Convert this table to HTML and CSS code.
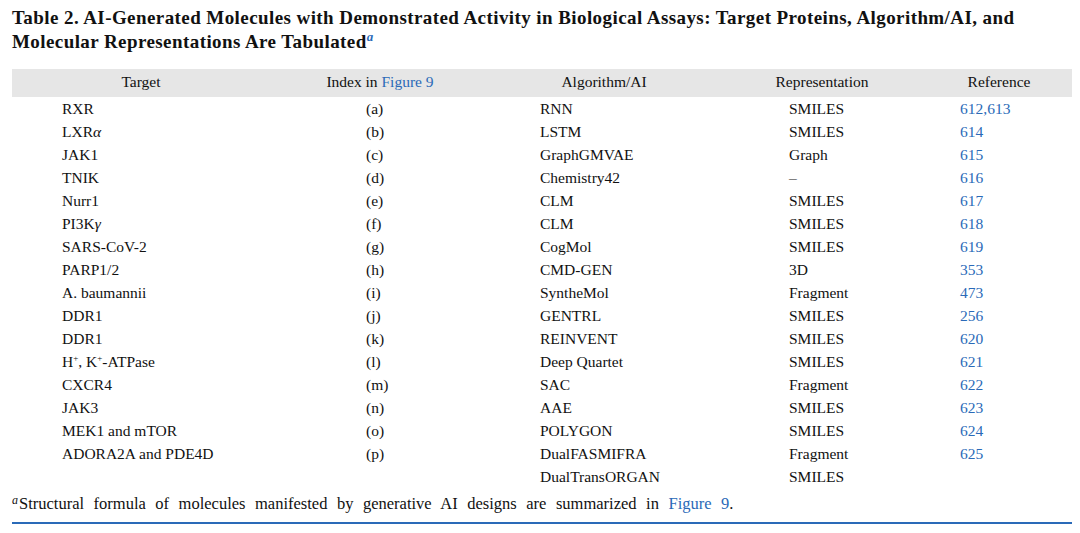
FILE: index.html
```html
<!DOCTYPE html>
<html>
<head>
<meta charset="utf-8">
<link rel="stylesheet" href="styles.css">
</head>
<body>
<div class="page">
  <h1 class="title">Table 2. AI-Generated Molecules with Demonstrated Activity in Biological Assays: Target Proteins, Algorithm/AI, and<br>Molecular Representations Are Tabulated<sup class="fn">a</sup></h1>
  <div class="table">
    <div class="row head">
      <div class="c c1">Target</div>
      <div class="c c2">Index in <span class="link">Figure 9</span></div>
      <div class="c c3">Algorithm/AI</div>
      <div class="c c4">Representation</div>
      <div class="c c5">Reference</div>
    </div>
    <div class="row"><div class="c c1">RXR</div><div class="c c2">(a)</div><div class="c c3">RNN</div><div class="c c4">SMILES</div><div class="c c5 link">612,613</div></div>
    <div class="row"><div class="c c1">LXR<i>α</i></div><div class="c c2">(b)</div><div class="c c3">LSTM</div><div class="c c4">SMILES</div><div class="c c5 link">614</div></div>
    <div class="row"><div class="c c1">JAK1</div><div class="c c2">(c)</div><div class="c c3">GraphGMVAE</div><div class="c c4">Graph</div><div class="c c5 link">615</div></div>
    <div class="row"><div class="c c1">TNIK</div><div class="c c2">(d)</div><div class="c c3">Chemistry42</div><div class="c c4">–</div><div class="c c5 link">616</div></div>
    <div class="row"><div class="c c1">Nurr1</div><div class="c c2">(e)</div><div class="c c3">CLM</div><div class="c c4">SMILES</div><div class="c c5 link">617</div></div>
    <div class="row"><div class="c c1">PI3K<i>γ</i></div><div class="c c2">(f)</div><div class="c c3">CLM</div><div class="c c4">SMILES</div><div class="c c5 link">618</div></div>
    <div class="row"><div class="c c1">SARS-CoV-2</div><div class="c c2">(g)</div><div class="c c3">CogMol</div><div class="c c4">SMILES</div><div class="c c5 link">619</div></div>
    <div class="row"><div class="c c1">PARP1/2</div><div class="c c2">(h)</div><div class="c c3">CMD-GEN</div><div class="c c4">3D</div><div class="c c5 link">353</div></div>
    <div class="row"><div class="c c1">A. baumannii</div><div class="c c2">(i)</div><div class="c c3">SyntheMol</div><div class="c c4">Fragment</div><div class="c c5 link">473</div></div>
    <div class="row"><div class="c c1">DDR1</div><div class="c c2">(j)</div><div class="c c3">GENTRL</div><div class="c c4">SMILES</div><div class="c c5 link">256</div></div>
    <div class="row"><div class="c c1">DDR1</div><div class="c c2">(k)</div><div class="c c3">REINVENT</div><div class="c c4">SMILES</div><div class="c c5 link">620</div></div>
    <div class="row"><div class="c c1">H<sup class="ion">+</sup>, K<sup class="ion">+</sup>-ATPase</div><div class="c c2">(l)</div><div class="c c3">Deep Quartet</div><div class="c c4">SMILES</div><div class="c c5 link">621</div></div>
    <div class="row"><div class="c c1">CXCR4</div><div class="c c2">(m)</div><div class="c c3">SAC</div><div class="c c4">Fragment</div><div class="c c5 link">622</div></div>
    <div class="row"><div class="c c1">JAK3</div><div class="c c2">(n)</div><div class="c c3">AAE</div><div class="c c4">SMILES</div><div class="c c5 link">623</div></div>
    <div class="row"><div class="c c1">MEK1 and mTOR</div><div class="c c2">(o)</div><div class="c c3">POLYGON</div><div class="c c4">SMILES</div><div class="c c5 link">624</div></div>
    <div class="row"><div class="c c1">ADORA2A and PDE4D</div><div class="c c2">(p)</div><div class="c c3">DualFASMIFRA</div><div class="c c4">Fragment</div><div class="c c5 link">625</div></div>
    <div class="row"><div class="c c1"></div><div class="c c2"></div><div class="c c3">DualTransORGAN</div><div class="c c4">SMILES</div><div class="c c5"></div></div>
  </div>
  <p class="note"><sup class="nm">a</sup>Structural formula of molecules manifested by generative AI designs are summarized in <span class="link">Figure 9</span>.</p>
  <div class="rule"></div>
</div>
</body>
</html>
```

FILE: styles.css
```css
html, body {
  margin: 0;
  padding: 0;
  background: #ffffff;
}
body {
  font-family: "Liberation Serif", "Times New Roman", serif;
  color: #111111;
}
.page {
  padding: 6px 8px 0 12px;
}
.title {
  margin: 0;
  font-size: 19px;
  line-height: 24px;
  letter-spacing: 0.42px;
  font-weight: bold;
  color: #111111;
  white-space: nowrap;
}
.fn {
  font-style: italic;
  color: #2a6ab8;
  font-size: 13px;
  line-height: 0;
  vertical-align: 7px;
  letter-spacing: 0;
}
.table {
  margin-top: 15px;
  width: 1060px;
}
.row {
  display: grid;
  grid-template-columns: 258px 220px 228px 208px 146px;
  height: 23px;
  align-items: center;
  font-size: 15.5px;
}
.row.head {
  background: #e6e6e6;
  height: 28px;
}
.head .c {
  text-align: center;
  padding: 0 0 2px 0;
}
.c1 { padding-left: 50px; }
.c2 { padding-left: 96px; }
.c3 { padding-left: 50px; }
.c4 { padding-left: 71px; }
.c5 { padding-left: 34px; }
.link {
  color: #2a6ab8;
}
.ion {
  font-size: 9px;
  line-height: 0;
  vertical-align: 6px;
}
.note {
  margin: 6px 0 0 0;
  font-size: 16.5px;
  line-height: 20px;
  word-spacing: 5.4px;
  white-space: nowrap;
}
.nm {
  font-style: italic;
  font-size: 12px;
  line-height: 0;
  vertical-align: 5px;
  margin-right: 1px;
}
.rule {
  margin-top: 8px;
  width: 1060px;
  height: 2px;
  background: #2a6ab8;
}
```
